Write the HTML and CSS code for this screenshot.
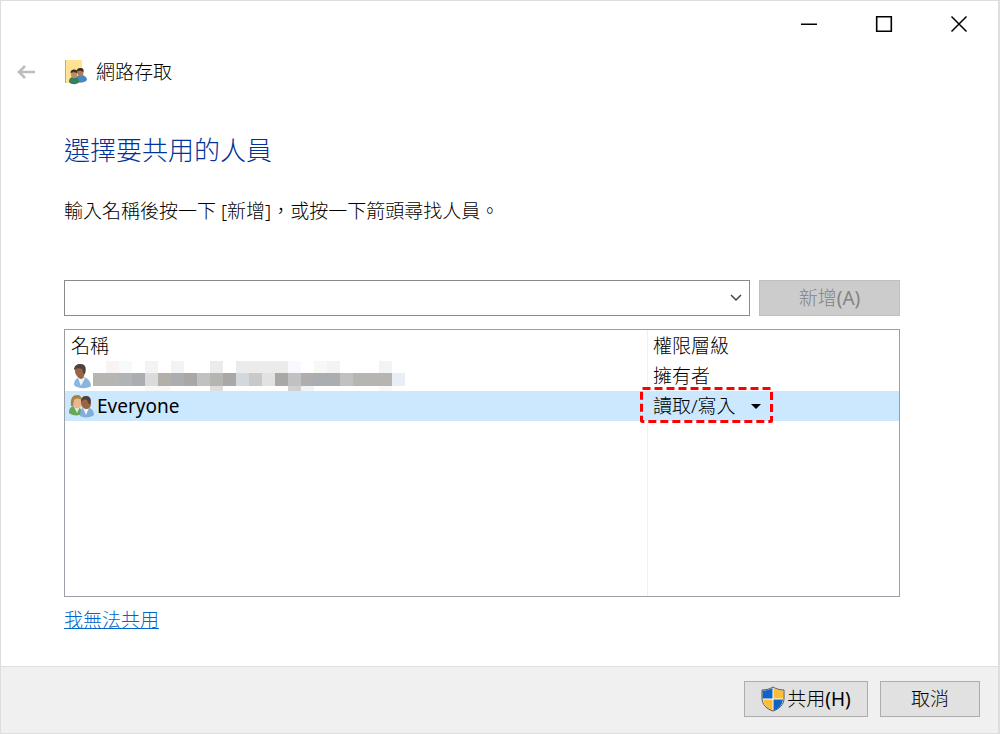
FILE: index.html
```html
<!DOCTYPE html>
<html lang="zh-Hant">
<head>
    <meta charset="utf-8">
    <title>網路存取</title>
    <link rel="stylesheet" href="styles.css">
</head>
<body>
    <div class="window">
        <div class="titlebar">
            <button type="button" class="win-button" aria-label="最小化">
                <svg width="18" height="18" viewBox="0 0 18 18"><path d="M1 9.250h16" stroke="#000" stroke-width="1.500"/></svg>
            </button>
            <button type="button" class="win-button" aria-label="最大化">
                <svg width="18" height="18" viewBox="0 0 18 18"><path d="M1.700 1.700h14.600v14.600H1.700z" fill="none" stroke="#000" stroke-width="1.600"/></svg>
            </button>
            <button type="button" class="win-button" aria-label="關閉">
                <svg width="18" height="18" viewBox="0 0 18 18"><path d="M1.500 1.500l15 15M16.500 1.500l-15 15" stroke="#000" stroke-width="1.500"/></svg>
            </button>
        </div>

        <div class="header">
            <button type="button" class="back" aria-label="上一頁">
                <svg width="20" height="16" viewBox="0 0 20 16"><path d="M19 8H3M9 2L3 8l6 6" fill="none" stroke="#bdbdbd" stroke-width="2.500"/></svg>
            </button>
            <svg class="folder" width="22" height="26" viewBox="0 0 22 26">
                <path d="M0 1h17v23H0z" fill="#ffe393"/>
                <path d="M0 1h1v23H0z" fill="#c9ad62"/>
                <path d="M10 23c0-5 2-7 6-7 3 0 6 2 6 5-2 3-8 3-12 2z" fill="#4787c6"/>
                <ellipse cx="15.500" cy="13.500" rx="3" ry="3.800" fill="#b47b50"/>
                <path d="M12 12c0-3 2-3 4-3s3 1 2.500 4c-2-1-3.500-2-6.500-.5z" fill="#3b2d28"/>
                <path d="M4 23c0-4 2-5 5-5s5 2 5 5c-2 3-8 3-10 0z" fill="#35815a"/>
                <ellipse cx="9" cy="15.500" rx="3" ry="3.800" fill="#c28a5f"/>
                <path d="M5.500 14.500c0-3 1-4 3.500-4s4 1 3.500 4c-2-1-4-2-7 0z" fill="#39312f"/>
            </svg>
            <span>網路存取</span>
        </div>

        <form class="content">
            <h1>選擇要共用的人員</h1>
            <label class="hint" for="person">輸入名稱後按一下 [新增]，或按一下箭頭尋找人員。</label>
            <div class="add-row">
                <div class="combo">
                    <input type="text" id="person">
                    <button type="button" class="combo-arrow" aria-label="尋找人員">
                        <svg width="12" height="8" viewBox="0 0 12 8"><path d="M1 1l5 5 5-5" fill="none" stroke="#444" stroke-width="1.500"/></svg>
                    </button>
                </div>
                <button type="button" class="add" disabled>新增<span class="latin">(A)</span></button>
            </div>

            <div class="list">
                <table>
                    <thead>
                        <tr><th>名稱</th><th class="level">權限層級</th></tr>
                    </thead>
                    <tbody>
                        <tr>
                            <td>
                                <div class="person owner">
                                    <svg width="22" height="26" viewBox="0 0 22 26">
                                        <path d="M3 22c0-5 3-8 8-8s9 4 9 9c-3 3-14 3-17-1z" fill="#8ab5df"/>
                                        <path d="M7 15l3 8 4-8z" fill="#eef5fb"/>
                                        <path d="M4 8c0-5 2-7 5-7s6 3 5 8-2 7-4 7-6-4-6-8z" fill="#9a6544"/>
                                        <path d="M3 7c0-4 3-6 6-6 5 0 7 3 5 10-2 0-2-3-3-5-3-1-5-1-8 1z" fill="#4b4340"/>
                                    </svg>
                                    <!-- masked account name -->
                                    <svg width="312" height="30" viewBox="0 0 312 30">
                                        <path d="M13 0h13v12H13z" fill="#f9f4f3"/>
                                        <path d="M26 0h13v12H26zM195 0h13v12h-13z" fill="#f7f9fc"/>
                                        <path d="M52 0h13v12H52zM78 0h13v12H78zM234 0h13v12h-13zM286 0h13v12h-13z" fill="#f4f3f4"/>
                                        <path d="M221 0h13v12h-13z" fill="#f8f8f5"/>
                                        <path d="M117 0h13v12h-13zM143 0h52v12h-52z" fill="#ebebeb"/>
                                        <path d="M0 12h299v13H0z" fill="#b7b5b2"/>
                                        <path d="M26 12h13v13H26z" fill="#b0b4b6"/>
                                        <path d="M39 12h13v13H39zM78 12h13v13H78zM234 12h13v13h-13z" fill="#abadb0"/>
                                        <path d="M52 12h13v13H52z" fill="#dbdbdb"/>
                                        <path d="M65 12h13v13H65z" fill="#b3b0a9"/>
                                        <path d="M91 12h13v13H91zM130 12h13v13h-13zM182 12h13v13h-13z" fill="#aaa8a7"/>
                                        <path d="M104 12h13v13h-13zM195 12h13v13h-13zM247 12h13v13h-13z" fill="#c2c1c1"/>
                                        <path d="M143 12h13v13h-13z" fill="#d3d8dc"/>
                                        <path d="M156 12h13v13h-13z" fill="#c9c9c9"/>
                                        <path d="M169 12h13v13h-13z" fill="#e2e2e1"/>
                                        <path d="M208 12h13v13h-13z" fill="#b0adae"/>
                                        <path d="M221 12h13v13h-13z" fill="#aaaeb0"/>
                                        <path d="M299 12h13v13h-13z" fill="#e9edf4"/>
                                        <path d="M117 25h13v5h-13z" fill="#dededd"/>
                                        <path d="M195 25h13v5h-13z" fill="#d0d0d0"/>
                                        <path d="M208 25h13v5h-13z" fill="#eff3fa"/>
                                        <path d="M52 25h26v5H52zM286 25h13v5h-13z" fill="#f8f8f7"/>
                                    </svg>
                                </div>
                            </td>
                            <td class="level">擁有者</td>
                        </tr>
                        <tr class="selected">
                            <td>
                                <div class="person">
                                    <svg width="26" height="24" viewBox="0 0 26 24">
                                        <path d="M0 19c0-5 2-7 6-7s7 3 7 8c-3 2-10 2-13-1z" fill="#67a657"/>
                                        <path d="M5 13l3 6 3-6z" fill="#dcecd6"/>
                                        <path d="M3 8c0-4 2-6 5-6s5 2 5 6-2 6-5 6-5-2-5-6z" fill="#e9b78d"/>
                                        <path d="M2 12c-1-8 2-11 6-11 3 0 5 2 5 5-3-2-6-2-8 0l-1 6z" fill="#a98145"/>
                                        <path d="M11 22c0-6 2-9 6-9s8 3 8 8c-3 3-11 3-14 1z" fill="#82aeda"/>
                                        <path d="M14 14l3 7 3-7z" fill="#eef5fb"/>
                                        <path d="M12 8c0-4 2-6 5-6s5 3 5 7-2 6-5 6-5-3-5-7z" fill="#9a6544"/>
                                        <path d="M12 8c0-5 3-6 5-6 4 0 6 3 4 8-2 0-2-2-3-4-2-1-4-1-6 2z" fill="#4b4340"/>
                                    </svg>
                                    <span class="latin">Everyone</span>
                                </div>
                            </td>
                            <td class="level">
                                <div class="permission">
                                    <select aria-label="Everyone 權限層級">
                                        <option>讀取/寫入</option>
                                    </select>
                                    <svg class="marker" width="133" height="36"><rect x="1.500" y="1.500" width="130" height="33" rx="1" fill="none" stroke="#f00" stroke-width="3" stroke-dasharray="8 4"/></svg>
                                </div>
                            </td>
                        </tr>
                    </tbody>
                </table>
            </div>
            <a href="#" class="help">我無法共用</a>
        </form>

        <div class="footer">
            <button type="button" class="share">
                <svg width="24" height="26" viewBox="0 0 24 26">
                    <path d="M12 1c3 2 7 3 11 3v8c0 7-5 11-11 13C6 23 1 19 1 12V4c4 0 8-1 11-3z" fill="#fff"/>
                    <path d="M11.500 2v10.500H1.500V4.500C5 4.500 8 4 11.500 2z" fill="#1064c8"/>
                    <path d="M12.500 2v10.500h10V4.500C19 4.500 16 4 12.500 2z" fill="#ffbd36"/>
                    <path d="M11.500 24.500v-11H2c1 6 4 9 9.500 11z" fill="#ffbd36"/>
                    <path d="M12.500 24.500v-11H22c-1 6-4 9-9.500 11z" fill="#1064c8"/>
                    <path d="M12 1c3 2 7 3 11 3v8c0 7-5 11-11 13C6 23 1 19 1 12V4c4 0 8-1 11-3z" fill="none" stroke="#555"/>
                </svg>
                <span>共用<span class="latin">(H)</span></span>
            </button>
            <button type="button">取消</button>
        </div>
    </div>
</body>
</html>
```
FILE: styles.css
```css
*
{
    box-sizing: border-box;
}
body
{
    margin: 0;
    background-color: #dedede;
    color: #000;
    font-family: "Noto Sans", "Noto Sans CJK TC", sans-serif;
    font-size: 19px;
    font-weight: 300;
    line-height: 30px;
}

button, input, select
{
    font: inherit;
    color: inherit;
}

svg
{
    display: block;
    flex: none;
}

.latin
{
    font-weight: 400;
}

.window
{
    display: flex;
    flex-direction: column;
    min-height: 100vh;
    border: 1px solid #dedede;
    border-right-width: 2px;
    background-color: #fff;
}

.titlebar
{
    display: flex;
    justify-content: flex-end;
    padding-right: 2px;
}

.win-button
{
    display: flex;
    align-items: center;
    justify-content: center;
    width: 75px;
    height: 46px;
    padding: 0;
    border: 0;
    background: none;
}

.header
{
    display: flex;
    align-items: center;
    height: 50px;
    padding-left: 15px;
}

.back
{
    padding: 0;
    border: 0;
    background: none;
}

.folder
{
    margin: 0 9px 0 29px;
}

.content
{
    flex: 1;
    display: flex;
    flex-direction: column;
    padding: 35px 98px 30px 63px;
}

h1
{
    margin: 0;
    color: #003399;
    font-size: 26px;
    font-weight: 300;
    line-height: 36px;
}

.hint
{
    margin-top: 28px;
}

.add-row
{
    display: flex;
    gap: 9px;
    margin-top: 54px;
}

.combo
{
    flex: 1;
    display: flex;
    height: 36px;
    border: 1px solid #8a8a8a;
}

.combo input
{
    flex: 1;
    min-width: 0;
    padding: 0 6px;
    border: 0;
    outline: 0;
    background: none;
}

.combo-arrow
{
    padding: 0 7px;
    border: 0;
    background: none;
}

.add
{
    width: 141px;
    padding: 0;
    border: 1px solid #bfbfbf;
    background-color: #ccc;
    color: #838383;
}

/* column divider runs the full height of the list */
.list
{
    height: 268px;
    margin-top: 13px;
    padding-top: 1px;
    border: 1px solid #9a9fa8;
    background: linear-gradient(#f0f0f0, #f0f0f0) right 251px top / 1px 100% no-repeat;
}

table
{
    width: 100%;
    height: 90px;
    border-collapse: collapse;
    table-layout: fixed;
}

th, td
{
    height: 30px;
    padding: 0 0 0 6px;
    font-weight: 300;
    text-align: left;
}

.level
{
    width: 252px;
}

.selected
{
    background-color: #cce8ff;
}

.person
{
    display: flex;
    align-items: center;
    gap: 2px;
    height: 30px;
    margin-left: -2px;
}

.owner
{
    gap: 0;
    margin-left: 0;
}

.permission
{
    position: relative;
}

.permission select
{
    display: block;
    width: 112px;
    padding: 0;
    border: 0;
    appearance: none;
    background: none;
}

.permission::after
{
    content: "";
    position: absolute;
    left: 98px;
    top: 13px;
    border: 5px solid transparent;
    border-top-color: #000;
    border-bottom: 0;
}

.marker
{
    position: absolute;
    left: -13px;
    top: -4px;
    pointer-events: none;
}

.help
{
    align-self: flex-start;
    margin-top: 8px;
    color: #0066cc;
}

.footer
{
    display: flex;
    justify-content: flex-end;
    gap: 12px;
    padding: 14px 18px 16px;
    border-top: 1px solid #dfdfdf;
    background-color: #f0f0f0;
}

.footer button
{
    display: flex;
    align-items: center;
    justify-content: center;
    gap: 2px;
    width: 100px;
    height: 36px;
    padding: 0;
    border: 1px solid #adadad;
    background-color: #e1e1e1;
}

.footer .share
{
    width: 124px;
}
```
